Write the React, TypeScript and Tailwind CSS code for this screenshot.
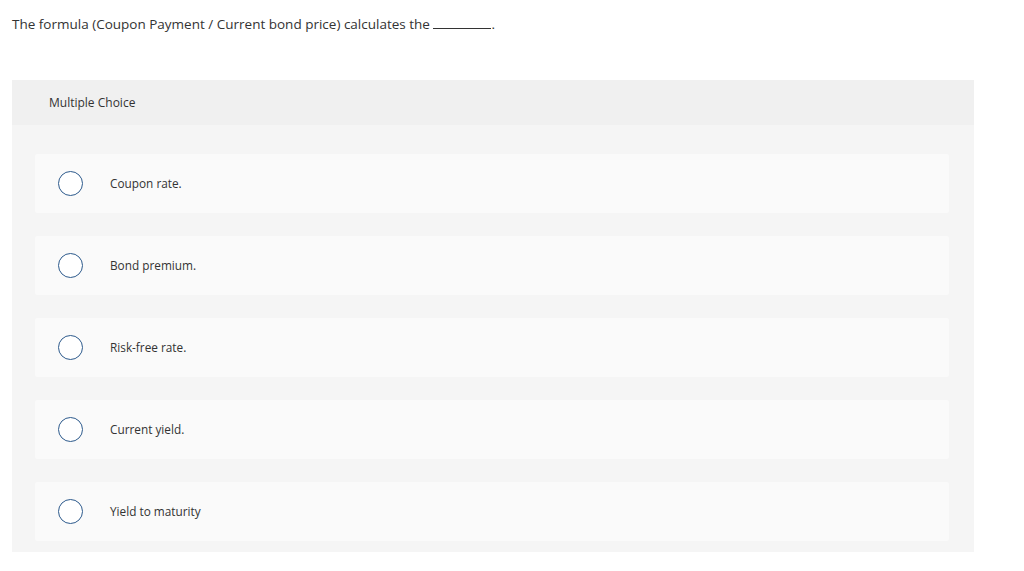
import React from 'react';

const options = ['Coupon rate.', 'Bond premium.', 'Risk-free rate.', 'Current yield.', 'Yield to maturity'];

const App: React.FC = () => {
  return (
    <div className="w-[1024px] h-[571px] bg-white text-[#333] font-['Open_Sans',sans-serif]">
      {/* Question */}
      <div className="pt-[15px] pl-[12px] h-[80px] text-[13.5px] leading-[18px]">
        The formula (Coupon Payment / Current bond price) calculates the{' '}
        <span className="inline-block w-[58px] border-b border-[#333] align-baseline" />.
      </div>

      {/* Choices panel */}
      <div className="ml-[12px] w-[962px] bg-[#f5f5f5]">
        <div className="h-[45px] bg-[#f0f0f0] flex items-center pl-[37px] pt-[1px] text-[12px]">Multiple Choice</div>
        <div className="flex flex-col gap-[23px] pt-[29px] pb-[11px] pl-[23px] pr-[25px]">
          {options.map((opt) => (
            <div key={opt} className="h-[59px] bg-[#fafafa] rounded-[2px] flex items-center">
              <div className="ml-[23px] w-[25px] h-[25px] rounded-full border border-[#2d5a8c] bg-white" />
              <span className="ml-[27px] pt-[1px] text-[11.8px]">{opt}</span>
            </div>
          ))}
        </div>
      </div>
    </div>
  );
};

export default App;
